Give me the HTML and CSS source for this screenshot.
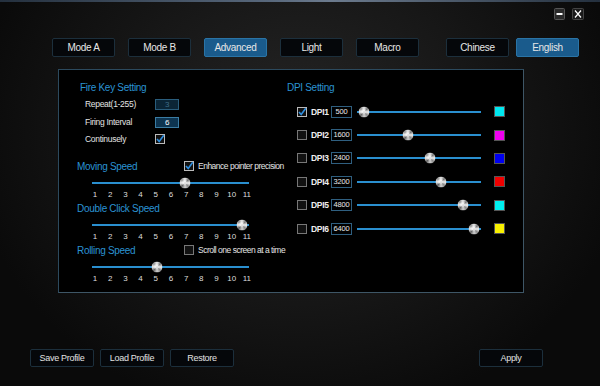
FILE: index.html
```html
<!DOCTYPE html>
<html lang="en">
<head>
    <meta charset="UTF-8">
    <title>Mouse Settings</title>
    <link rel="stylesheet" href="styles.css">
</head>
<body>
    <div class="topline"></div>
    <div class="titlebar">
        <span class="winbtn">
            <svg width="11" height="12" viewBox="0 0 11 12"><rect x="0.5" y="0.5" width="10" height="11" rx="1" fill="#2a2a2a" stroke="#555"/><rect x="2.5" y="5" width="6" height="2" fill="#fff"/></svg>
        </span>
        <span class="winbtn">
            <svg width="12" height="12" viewBox="0 0 12 12"><rect x="0.5" y="0.5" width="11" height="11" rx="1" fill="#1a1a1a" stroke="#444"/><path d="M3 2.5 L9 9.5 M9 2.5 L3 9.5" stroke="#fff" stroke-width="1.2"/></svg>
        </span>
    </div>

    <nav class="tabs">
        <div class="tab-group">
            <a class="tab">Mode A</a>
            <a class="tab">Mode B</a>
            <a class="tab active">Advanced</a>
            <a class="tab">Light</a>
            <a class="tab">Macro</a>
        </div>
        <div class="tab-group lang">
            <a class="tab">Chinese</a>
            <a class="tab active">English</a>
        </div>
    </nav>

    <div class="panel">
        <div class="col-left">
            <div class="title fk-title">Fire Key Setting</div>
            <div class="fk-row">
                <span class="fk-label">Repeat(1-255)</span>
                <span class="numbox disabled">3</span>
            </div>
            <div class="fk-row">
                <span class="fk-label">Firing Interval</span>
                <span class="numbox">6</span>
            </div>
            <div class="fk-row short">
                <span class="fk-label">Continusely</span>
                <span class="check on"><svg width="10" height="10" viewBox="0 0 10 10"><rect x="0.5" y="0.5" width="9" height="9" fill="#111" stroke="#bbb"/><path d="M2 5 L4.2 7.5 L8.8 1.2" fill="none" stroke="#2e8fe0" stroke-width="1.6"/></svg></span>
            </div>

            <div class="sec-head first">
                <span class="title sec-title">Moving Speed</span>
                <span class="check on"><svg width="10" height="10" viewBox="0 0 10 10"><rect x="0.5" y="0.5" width="9" height="9" fill="#111" stroke="#bbb"/><path d="M2 5 L4.2 7.5 L8.8 1.2" fill="none" stroke="#2e8fe0" stroke-width="1.6"/></svg></span>
                <span class="opt-label">Enhance pointer precision</span>
            </div>
            <div class="slider wide"><span class="thumb" style="left: 59%"></span></div>
            <div class="scale">
                <span>1</span><span>2</span><span>3</span><span>4</span><span>5</span><span>6</span><span>7</span><span>8</span><span>9</span><span>10</span><span>11</span>
            </div>

            <div class="sec-head">
                <span class="title sec-title">Double Click Speed</span>
            </div>
            <div class="slider wide"><span class="thumb" style="left: 95.5%"></span></div>
            <div class="scale">
                <span>1</span><span>2</span><span>3</span><span>4</span><span>5</span><span>6</span><span>7</span><span>8</span><span>9</span><span>10</span><span>11</span>
            </div>

            <div class="sec-head">
                <span class="title sec-title">Rolling Speed</span>
                <span class="check"><svg width="10" height="10" viewBox="0 0 10 10"><rect x="0.5" y="0.5" width="9" height="9" fill="#111" stroke="#777"/></svg></span>
                <span class="opt-label">Scroll one screen at a time</span>
            </div>
            <div class="slider wide"><span class="thumb" style="left: 41.5%"></span></div>
            <div class="scale">
                <span>1</span><span>2</span><span>3</span><span>4</span><span>5</span><span>6</span><span>7</span><span>8</span><span>9</span><span>10</span><span>11</span>
            </div>
        </div>

        <div class="col-right">
            <div class="title dpi-title">DPI Setting</div>
            <ul class="dpi-list" id="dpi-list"></ul>
        </div>
    </div>

    <div class="footer">
        <a class="btn">Save Profile</a>
        <a class="btn">Load Profile</a>
        <a class="btn">Restore</a>
        <a class="btn apply">Apply</a>
    </div>

    <script>
        const dpis = [
            { nome: "DPI1", valor: 500, pos: 5.6, cor: "#00e8f0", on: true },
            { nome: "DPI2", valor: 1600, pos: 41, cor: "#f000f0", on: false },
            { nome: "DPI3", valor: 2400, pos: 59, cor: "#0000f0", on: false },
            { nome: "DPI4", valor: 3200, pos: 68, cor: "#f00000", on: false },
            { nome: "DPI5", valor: 4800, pos: 85.5, cor: "#00f0f0", on: false },
            { nome: "DPI6", valor: 6400, pos: 94.5, cor: "#f8f000", on: false }
        ];
        const lista = document.getElementById("dpi-list");
        const marca = '<path d="M2 5 L4.2 7.5 L8.8 1.2" fill="none" stroke="#2e8fe0" stroke-width="1.6"/>';
        dpis.forEach(d => {
            const li = document.createElement("li");
            li.className = "dpi-row";
            li.innerHTML = `
                <span class="check"><svg width="10" height="10" viewBox="0 0 10 10"><rect x="0.5" y="0.5" width="9" height="9" fill="#111" stroke="${d.on ? "#bbb" : "#777"}"/>${d.on ? marca : ""}</svg></span>
                <span class="dpi-name">${d.nome}</span>
                <span class="dpi-val">${d.valor}</span>
                <div class="slider dpi"><span class="thumb" style="left: ${d.pos}%"></span></div>
                <span class="swatch" style="background: ${d.cor}"></span>`;
            lista.appendChild(li);
        });
    </script>
</body>
</html>
```

FILE: styles.css
```css
body {
    margin: 0;
    width: 600px;
    height: 386px;
    overflow: hidden;
    font-family: "Liberation Sans", Arial, sans-serif;
    color: #e4e4e4;
    background: radial-gradient(ellipse 55% 75% at 50% 35%, #262626 0%, #171717 55%, #0a0a0a 100%);
}

.topline {
    height: 2px;
    background: linear-gradient(to right, #24303e, #58687c 45%, #6c7b8e 55%, #24303e);
}

.titlebar {
    height: 24px;
    display: flex;
    justify-content: flex-end;
    align-items: center;
    gap: 7px;
    padding-right: 16px;
}
.winbtn svg {
    display: block;
}

/* abas do topo */
.tabs {
    display: flex;
    margin-top: 12px;
    padding-left: 52px;
    gap: 27px;
}
.tab-group {
    display: flex;
    gap: 13px;
}
.tab-group.lang {
    gap: 7px;
}
.tab {
    width: 61px;
    height: 17px;
    line-height: 17px;
    text-align: center;
    font-size: 10px;
    letter-spacing: -0.3px;
    color: #e6e6e6;
    background: #05070a;
    border: 1px solid #1c2f3c;
    border-radius: 2px;
}
.tab.active {
    background: #1a5b8c;
    border-color: #2a74a6;
}

/* painel principal */
.panel {
    display: flex;
    margin: 12px 0 0 58px;
    width: 464px;
    height: 222px;
    background: #000;
    border: 1px solid #2c4a5e;
    border-right-color: #3e5666;
    border-bottom-color: #3e5666;
}
.col-left {
    width: 221px;
    flex-shrink: 0;
    padding-top: 11px;
}
.col-right {
    flex: 1;
    padding-top: 11px;
}
.title {
    color: #2b93d3;
    font-size: 10px;
    letter-spacing: -0.3px;
    white-space: nowrap;
}
.fk-title {
    height: 14px;
    line-height: 14px;
    padding-left: 21px;
}
.fk-row {
    display: flex;
    align-items: center;
    height: 18px;
    padding-left: 26px;
    font-size: 8.5px;
    letter-spacing: -0.3px;
}
.fk-row.short {
    height: 16px;
}
.fk-label {
    width: 70px;
}
.numbox {
    width: 22px;
    height: 9px;
    line-height: 9px;
    text-align: center;
    font-size: 8px;
    color: #fff;
    background: #0d3450;
    border: 1px solid #3a7ca3;
}
.numbox.disabled {
    color: #3f6b85;
    background: #0b2536;
    border-color: #2a5d7c;
}
.check svg {
    display: block;
}

.sec-head {
    display: flex;
    align-items: center;
    height: 14px;
    padding-left: 18px;
}
.sec-head.first {
    margin-top: 12px;
}
.sec-title {
    width: 107px;
    flex-shrink: 0;
}
.opt-label {
    margin-left: 4px;
    font-size: 8.5px;
    letter-spacing: -0.5px;
    white-space: nowrap;
}

.slider {
    position: relative;
    height: 12px;
}
.slider::before {
    content: "";
    position: absolute;
    left: 0;
    right: 0;
    top: 5px;
    height: 2px;
    background: #2a8fcf;
}
.slider.wide {
    margin: 4px 0 0 33px;
    width: 157px;
}
.thumb {
    position: absolute;
    top: 50%;
    width: 11px;
    height: 11px;
    border-radius: 50%;
    transform: translate(-50%, -50%);
    background:
        radial-gradient(circle at 45% 45%, rgba(255, 255, 255, 0.8) 0 15%, rgba(255, 255, 255, 0) 40%),
        conic-gradient(#e8e8e8, #7a7a7a, #f4f4f4, #8a8a8a, #d0d0d0, #656565, #eeeeee, #909090, #e8e8e8);
}

.scale {
    display: flex;
    justify-content: space-between;
    margin-left: 30px;
    width: 164px;
    height: 12px;
    line-height: 12px;
    font-size: 8px;
    color: #dedede;
}
.scale span {
    width: 12px;
    text-align: center;
}

/* DPI */
.dpi-title {
    height: 14px;
    line-height: 14px;
    padding-left: 7px;
}
.dpi-list {
    list-style: none;
    margin: 5px 0 0;
    padding: 0;
}
.dpi-row {
    display: flex;
    align-items: center;
    height: 23.4px;
    padding-left: 17px;
}
.dpi-name {
    width: 20px;
    margin-left: 4px;
    font-size: 8.5px;
    font-weight: bold;
    letter-spacing: -0.3px;
    color: #eee;
}
.dpi-val {
    width: 19px;
    height: 10px;
    line-height: 10px;
    text-align: center;
    font-size: 7.5px;
    letter-spacing: -0.2px;
    color: #e8e8e8;
    background: #000;
    border: 1px solid #2f5f80;
}
.slider.dpi {
    width: 124px;
    margin-left: 5px;
}
.swatch {
    width: 9px;
    height: 9px;
    margin-left: 13px;
    border: 1px solid #555;
}

/* botoes de baixo */
.footer {
    display: flex;
    align-items: center;
    gap: 6px;
    margin-top: 56px;
    padding: 0 57px 0 30px;
}
.btn {
    width: 62px;
    height: 16px;
    line-height: 16px;
    text-align: center;
    font-size: 9px;
    letter-spacing: -0.3px;
    color: #e2e2e2;
    background: #05070a;
    border: 1px solid #1c2f3c;
    border-radius: 2px;
}
.btn.apply {
    margin-left: auto;
}
```
